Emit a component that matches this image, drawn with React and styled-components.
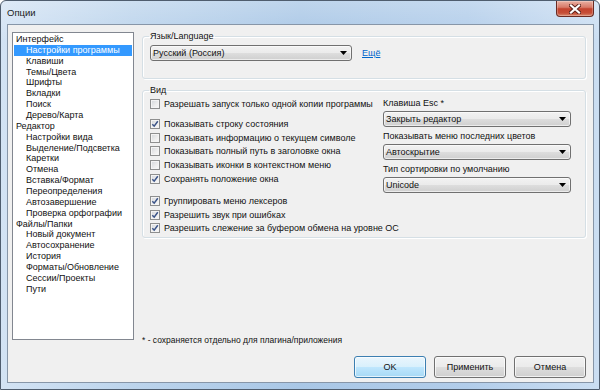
import React from 'react';
import styled, { createGlobalStyle } from 'styled-components';

const GlobalStyle = createGlobalStyle`
  html, body {
    margin: 0;
    padding: 0;
  }
  body {
    width: 600px;
    height: 390px;
    overflow: hidden;
    background: #ffffff;
    font-family: "Liberation Sans", Arial, sans-serif;
    font-size: 9px;
    color: #111;
  }
`;

const Window = styled.div`
  width: 600px;
  height: 390px;
  box-sizing: border-box;
  display: flex;
  flex-direction: column;
  border: 1px solid #4f5d6e;
  border-radius: 6px 6px 0 0;
  padding: 0 5px 6px 6px;
  background:
    linear-gradient(180deg, rgba(255, 255, 255, 0.25) 0%, rgba(255, 255, 255, 0) 40px),
    linear-gradient(90deg, #d3e3f4 0%, #bcd4ec 22%, #a9c7e6 50%, #b2cdea 78%, #cbdef2 100%);
`;

const TitleBar = styled.div`
  height: 23px;
  display: flex;
  align-items: flex-start;
  justify-content: space-between;
`;

const Title = styled.span`
  padding-top: 6px;
  line-height: 12px;
  font-size: 9.5px;
  color: #1b1b1b;
`;

const CloseButton = styled.div`
  width: 38px;
  height: 16px;
  box-sizing: border-box;
  display: flex;
  align-items: center;
  justify-content: center;
  border: 1px solid #6a2a22;
  border-top: none;
  border-radius: 0 0 4px 4px;
  background: linear-gradient(180deg, #eab0a2 0%, #d87a68 42%, #c4432e 52%, #c64e37 80%, #d98a70 100%);
  box-shadow: inset 0 0 0 1px rgba(255, 255, 255, 0.25);
`;

const Client = styled.div`
  flex: 1;
  display: flex;
  flex-direction: column;
  background: #f0f0f0;
  border: 1px solid #8796a8;
  padding: 7px 7px 4px 4px;
`;

const Body = styled.div`
  display: flex;
  gap: 8px;
`;

const Tree = styled.ul`
  list-style: none;
  margin: 0 0 6px 0;
  width: 122px;
  height: 308px;
  box-sizing: border-box;
  border: 1px solid #828790;
  background: #fff;
  padding: 1px 1px 0 1px;
`;

const TreeItem = styled.li`
  height: 10.87px;
  line-height: 10.87px;
  padding-left: ${(p) => (p.$child ? 12 : 2)}px;
  white-space: nowrap;
  background: ${(p) => (p.$selected ? '#3399ff' : 'transparent')};
  color: ${(p) => (p.$selected ? '#fff' : '#111')};
`;

const RightCol = styled.div`
  flex: 1;
  min-width: 0;
  display: flex;
  flex-direction: column;
`;

const Group = styled.fieldset`
  margin: ${(p) => p.$top}px 0 0 0;
  padding: ${(p) => p.$padTop}px 12px ${(p) => p.$padBottom}px 7px;
  border: 1px solid #d5dfe5;
  border-radius: 3px;
  box-shadow: 1px 1px 0 #fff, inset 1px 1px 0 #fff;
  min-width: 0;
`;

const Legend = styled.legend`
  padding: 0 1px;
  margin-left: -1px;
  line-height: 11px;
  font-size: 9px;
`;

const LangRow = styled.div`
  display: flex;
  align-items: center;
`;

const Combo = styled.div`
  width: ${(p) => p.$width}px;
  height: 16px;
  box-sizing: border-box;
  display: flex;
  align-items: center;
  justify-content: space-between;
  padding: 0 4px 0 2px;
  border: 1px solid #707070;
  border-radius: 3px;
  background: linear-gradient(180deg, #f2f2f2 0%, #ebebeb 48%, #dddddd 52%, #cfcfcf 100%);
  box-shadow: inset 0 0 0 1px rgba(255, 255, 255, 0.6);
  font-size: 9px;
`;

const Link = styled.a`
  margin-left: 10px;
  color: #0066cc;
  text-decoration: underline;
  font-size: 9px;
`;

const ViewTop = styled.div`
  display: flex;
  margin-bottom: 1px;
`;

const CheckCol = styled.div`
  width: 233px;
  flex: none;
  display: flex;
  flex-direction: column;
`;

const CheckRow = styled.div`
  height: 13.7px;
  display: flex;
  align-items: center;
  gap: 4px;
  white-space: nowrap;
  margin-bottom: ${(p) => p.$after || 0}px;
`;

const Box = styled.span`
  width: 10px;
  height: 10px;
  box-sizing: border-box;
  flex: none;
  display: flex;
  align-items: center;
  justify-content: center;
  border: 1px solid #8e8f8f;
  background: linear-gradient(135deg, #d3d6da 0%, #eeeeee 60%, #fafafa 100%);
  box-shadow: inset 0 0 0 1px #f4f4f4;
`;

const OptionCol = styled.div`
  width: 188px;
  flex: none;
  display: flex;
  flex-direction: column;
`;

const OptionLabel = styled.div`
  height: 12px;
  line-height: 12px;
  margin-bottom: 2px;
  white-space: nowrap;
`;

const OptionBlock = styled.div`
  margin-bottom: ${(p) => (p.$last ? 0 : 3)}px;
`;

const Footnote = styled.div`
  margin-top: auto;
  line-height: 12px;
  font-size: 8.5px;
`;

const Footer = styled.div`
  margin-top: 10px;
  display: flex;
  justify-content: flex-end;
  gap: 8px;
`;

const Button = styled.div`
  width: 72px;
  height: 22px;
  box-sizing: border-box;
  display: flex;
  align-items: center;
  justify-content: center;
  border: 1px solid ${(p) => (p.$default ? '#3c7fb1' : '#707070')};
  border-radius: 3px;
  background: ${(p) =>
    p.$default
      ? 'linear-gradient(180deg, #eaf6fd 0%, #d9f0fc 48%, #bee6fd 52%, #a7d9f5 100%)'
      : 'linear-gradient(180deg, #f2f2f2 0%, #ebebeb 48%, #dddddd 52%, #cfcfcf 100%)'};
  box-shadow: inset 0 0 0 1px rgba(255, 255, 255, 0.7);
  font-size: 9px;
`;

const Arrow = () => (
  <svg width="7" height="4" viewBox="0 0 7 4">
    <path d="M0 0 H7 L3.5 4 Z" fill="#000" />
  </svg>
);

const CloseX = () => (
  <svg width="12" height="10" viewBox="0 0 12 10">
    <path d="M2 1.5 L10 8.5 M10 1.5 L2 8.5" stroke="#5b2019" strokeWidth="4" strokeLinecap="square" />
    <path d="M2 1.5 L10 8.5 M10 1.5 L2 8.5" stroke="#ffffff" strokeWidth="2.2" strokeLinecap="square" />
  </svg>
);

const Checkbox = ({ checked }) => (
  <Box>
    {checked && (
      <svg width="8" height="8" viewBox="0 0 8 8">
        <path d="M1.3 4.2 L3.2 6.2 L6.8 1.2" fill="none" stroke="#3b5488" strokeWidth="1.5" />
      </svg>
    )}
  </Box>
);

const tree = [
  ['Интерфейс', false],
  ['Настройки программы', true, true],
  ['Клавиши', true],
  ['Темы/Цвета', true],
  ['Шрифты', true],
  ['Вкладки', true],
  ['Поиск', true],
  ['Дерево/Карта', true],
  ['Редактор', false],
  ['Настройки вида', true],
  ['Выделение/Подсветка', true],
  ['Каретки', true],
  ['Отмена', true],
  ['Вставка/Формат', true],
  ['Переопределения', true],
  ['Автозавершение', true],
  ['Проверка орфографии', true],
  ['Файлы/Папки', false],
  ['Новый документ', true],
  ['Автосохранение', true],
  ['История', true],
  ['Форматы/Обновление', true],
  ['Сессии/Проекты', true],
  ['Пути', true],
];

const topChecks = [
  ['Разрешать запуск только одной копии программы', false, 6.3],
  ['Показывать строку состояния', true],
  ['Показывать информацию о текущем символе', false],
  ['Показывать полный путь в заголовке окна', false],
  ['Показывать иконки в контекстном меню', false],
  ['Сохранять положение окна', true],
];

const bottomChecks = [
  ['Группировать меню лексеров', true],
  ['Разрешить звук при ошибках', true],
  ['Разрешить слежение за буфером обмена на уровне ОС', true],
];

const options = [
  ['Клавиша Esc *', 'Закрыть редактор'],
  ['Показывать меню последних цветов', 'Автоскрытие'],
  ['Тип сортировки по умолчанию', 'Unicode'],
];

export default function App() {
  return (
    <>
      <GlobalStyle />
      <Window>
        <TitleBar>
          <Title>Опции</Title>
          <CloseButton>
            <CloseX />
          </CloseButton>
        </TitleBar>
        <Client>
          <Body>
            <Tree>
              {tree.map(([label, child, selected]) => (
                <TreeItem key={label} $child={child} $selected={selected}>
                  {label}
                </TreeItem>
              ))}
            </Tree>
            <RightCol>
              <Group $top={-1} $padTop={3} $padBottom={17}>
                <Legend>Язык/Language</Legend>
                <LangRow>
                  <Combo $width={202}>
                    <span>Русский (Россия)</span>
                    <Arrow />
                  </Combo>
                  <Link>Ещё</Link>
                </LangRow>
              </Group>
              <Group $top={6} $padTop={1} $padBottom={2}>
                <Legend>Вид</Legend>
                <ViewTop>
                  <CheckCol>
                    {topChecks.map(([label, checked, after]) => (
                      <CheckRow key={label} $after={after}>
                        <Checkbox checked={checked} />
                        {label}
                      </CheckRow>
                    ))}
                  </CheckCol>
                  <OptionCol>
                    {options.map(([label, value], i) => (
                      <OptionBlock key={label} $last={i === options.length - 1}>
                        <OptionLabel>{label}</OptionLabel>
                        <Combo $width={188}>
                          <span>{value}</span>
                          <Arrow />
                        </Combo>
                      </OptionBlock>
                    ))}
                  </OptionCol>
                </ViewTop>
                {bottomChecks.map(([label, checked]) => (
                  <CheckRow key={label}>
                    <Checkbox checked={checked} />
                    {label}
                  </CheckRow>
                ))}
              </Group>
              <Footnote>* - сохраняется отдельно для плагина/приложения</Footnote>
            </RightCol>
          </Body>
          <Footer>
            <Button $default>OK</Button>
            <Button>Применить</Button>
            <Button>Отмена</Button>
          </Footer>
        </Client>
      </Window>
    </>
  );
}
